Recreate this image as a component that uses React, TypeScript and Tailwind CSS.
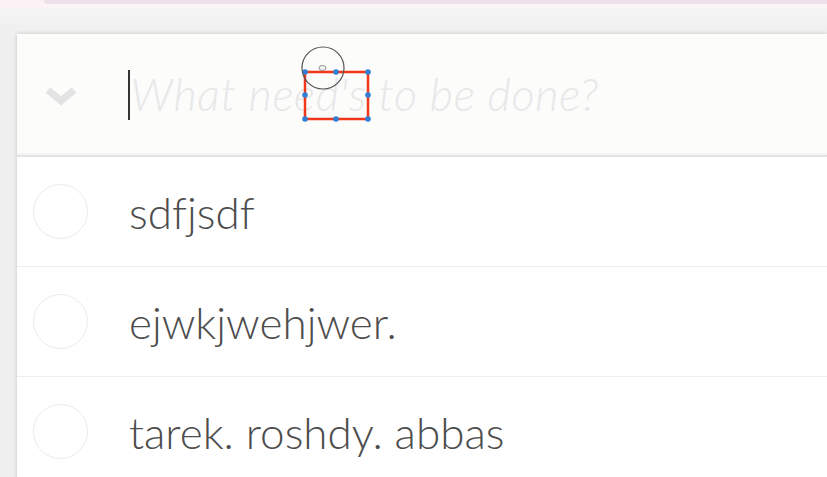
import React from "react";

const items = ["sdfjsdf", "ejwkjwehjwer.", "tarek. roshdy. abbas"];

function Overlay() {
  const handles: [number, number][] = [
    [305, 72], [336, 72], [368, 72],
    [305, 95], [368, 95],
    [305, 119], [336, 119], [368, 119],
  ];
  return (
    <svg className="absolute left-0 top-0 pointer-events-none" width={827} height={477}>
      <rect x={305} y={72} width={63} height={47} fill="none" stroke="#f2361a" strokeWidth={2.5} />
      {handles.map(([x, y], i) => (
        <circle key={i} cx={x} cy={y} r={2.8} fill="#2f7fd6" />
      ))}
      <circle cx={323} cy={68} r={21} fill="none" stroke="#555" strokeWidth={1.2} />
      <ellipse cx={322.5} cy={68} rx={3.5} ry={2.5} fill="#f4f4f4" stroke="#777" strokeWidth={0.8} />
    </svg>
  );
}

export default function App() {
  return (
    <div
      className="relative w-[827px] h-[477px] overflow-hidden bg-[#efefef] [font-variant-ligatures:none]"
      style={{ fontFamily: '"Lato", "Helvetica Neue", Arial, sans-serif' }}
    >
      <div className="h-[4px] bg-[#fcf2f5]">
        <div className="ml-[44px] h-[4px] rounded-bl-[4px] bg-[#eee0eb]" />
      </div>
      <div className="h-[4px] bg-[#fcf3f6]" />
      <div className="h-[26px] bg-gradient-to-b from-[#f4f4f4] to-[#efefef]" />
      <div className="ml-[17px] bg-white shadow-[0_0_4px_rgba(0,0,0,0.18)]">
        <div className="relative flex h-[121px] items-center bg-[#fcfcfb] shadow-[inset_0_-2px_1px_rgba(0,0,0,0.03)]">
          <div className="ml-[28px] mt-[6px] flex w-[83px] shrink-0 items-center">
            <svg width={32} height={24} viewBox="0 0 32 24">
              <path d="M3 4 L16 15 L29 4" fill="none" stroke="#e3e3e3" strokeWidth={7} strokeLinejoin="miter" />
            </svg>
          </div>
          <div className="h-[50px] w-[1.5px] bg-[#333]" />
          <span className="ml-[1px] text-[45px] font-light italic tracking-[0.7px] text-[#e8e8e8] leading-none">
            What need's to be done?
          </span>
        </div>
        <div className="h-[2px] bg-[#e4e4e4]" />
        {items.map((t, i) => (
          <div key={i} className="flex h-[110px] items-center border-b border-[#ededed] bg-white">
            <div className="ml-[16px] h-[55px] w-[55px] rounded-full border border-[#ebebeb]" />
            <span className="ml-[41px] text-[44px] font-light leading-none text-[#4d4d4d]">{t}</span>
          </div>
        ))}
      </div>
      <Overlay />
    </div>
  );
}
